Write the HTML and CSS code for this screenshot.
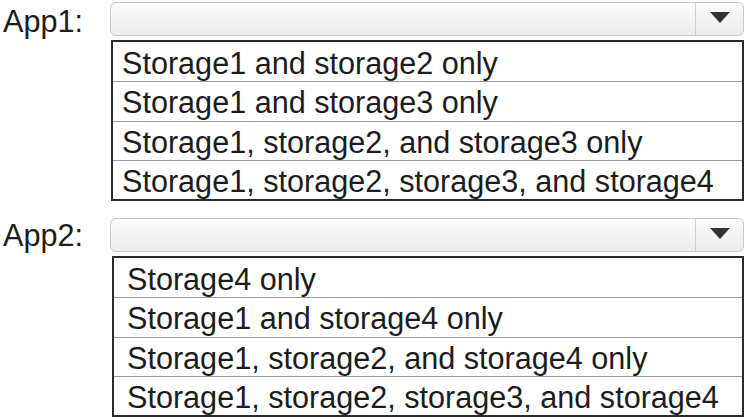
FILE: index.html
```html
<!DOCTYPE html>
<html>
<head>
<meta charset="utf-8">
<link rel="stylesheet" href="styles.css">
</head>
<body>
<div class="page">
  <div class="group group-1">
    <div class="label">App1:</div>
    <div class="field">
      <div class="select">
        <div class="select-value"></div>
        <div class="select-btn">
          <svg width="20" height="11" viewBox="0 0 20 11"><polygon points="0,0 20,0 10,11" fill="#333"/></svg>
        </div>
      </div>
      <div class="list list-1">
        <div class="opt">Storage1 and storage2 only</div>
        <div class="opt">Storage1 and storage3 only</div>
        <div class="opt">Storage1, storage2, and storage3 only</div>
        <div class="opt">Storage1, storage2, storage3, and storage4</div>
      </div>
    </div>
  </div>
  <div class="group group-2">
    <div class="label">App2:</div>
    <div class="field">
      <div class="select">
        <div class="select-value"></div>
        <div class="select-btn">
          <svg width="20" height="11" viewBox="0 0 20 11"><polygon points="0,0 20,0 10,11" fill="#333"/></svg>
        </div>
      </div>
      <div class="list list-2">
        <div class="opt">Storage4 only</div>
        <div class="opt">Storage1 and storage4 only</div>
        <div class="opt">Storage1, storage2, and storage4 only</div>
        <div class="opt">Storage1, storage2, storage3, and storage4</div>
      </div>
    </div>
  </div>
</div>
</body>
</html>
```
FILE: styles.css
```css
html, body {
  margin: 0;
  padding: 0;
  background: #ffffff;
}
body {
  font-family: "Liberation Sans", Arial, sans-serif;
  color: #1c1c1c;
  font-size: 30.6px;
}
.page {
  width: 744px;
  display: flex;
  flex-direction: column;
}
.group {
  display: flex;
  align-items: flex-start;
}
.group-1 {
  padding-top: 2px;
}
.group-2 {
  margin-top: 17px;
}
.label {
  width: 110px;
  flex: none;
  padding-left: 3px;
  box-sizing: border-box;
  line-height: 34px;
}
.group-1 .label { padding-top: 2px; }
.group-2 .label { padding-top: 0px; }
.field {
  flex: 1;
  display: flex;
  flex-direction: column;
}
.select {
  height: 34px;
  box-sizing: border-box;
  border: 1px solid #c9c9c9;
  border-radius: 6px;
  background: linear-gradient(#fbfbfb, #ececec);
  display: flex;
}
.select-value {
  flex: 1;
}
.select-btn {
  width: 48px;
  border-left: 1px solid #cfcfcf;
  display: flex;
  align-items: center;
  justify-content: center;
  padding-bottom: 4px;
  box-sizing: border-box;
}
.list {
  margin-top: 4px;
  height: 161px;
  box-sizing: border-box;
  border: 2px solid #2a2a2a;
  display: grid;
  grid-template-rows: repeat(4, 1fr);
  background: #fff;
}
.list-1 { margin-left: 1px; }
.list-2 { margin-left: 2px; }
.opt {
  border-top: 1px solid #9a9a9a;
  line-height: 34px;
  padding-top: 3px;
  white-space: nowrap;
}
.opt:first-child {
  border-top: none;
  padding-top: 4px;
}
.list-1 .opt { padding-left: 9px; }
.list-2 .opt { padding-left: 13px; }
```
